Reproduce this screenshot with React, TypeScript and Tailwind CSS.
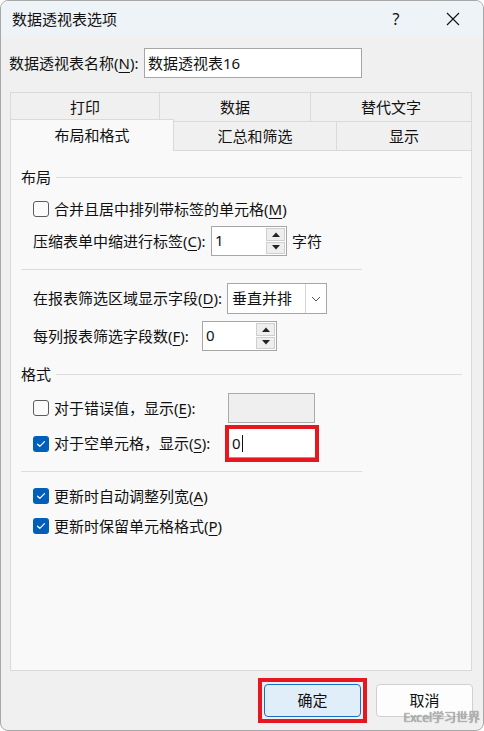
import React from 'react';

const font = "font-['Noto_Sans','Noto_Sans_CJK_SC',sans-serif]";

function Key({ k }: { k: string }) {
  return (
    <>
      (<span className="underline underline-offset-[3px] decoration-1">{k}</span>)
    </>
  );
}

function Check({ checked }: { checked?: boolean }) {
  if (checked) {
    return (
      <span className="flex h-4 w-4 shrink-0 items-center justify-center rounded-[3px] bg-[#005fb8]">
        <svg width="10" height="8" viewBox="0 0 10 8" fill="none">
          <path d="M1.5 4.2 L3.8 6.3 L8.5 1.6" stroke="white" strokeWidth="1.2" strokeLinecap="round" strokeLinejoin="round" />
        </svg>
      </span>
    );
  }
  return <span className="h-4 w-4 shrink-0 rounded-[3px] border border-[#5c5c5c] bg-[#fbfbfb]" />;
}

function Arrow({ up }: { up?: boolean }) {
  return (
    <svg width="8" height="5" viewBox="0 0 8 5">
      <path d={up ? 'M0 5 L4 0.5 L8 5 Z' : 'M0 0 L8 0 L4 4.5 Z'} fill="#222" />
    </svg>
  );
}

function Spinner({ value, width }: { value: string; width: string }) {
  return (
    <div className={`flex h-[30px] ${width} border border-[#a6a6a6] bg-white`}>
      <span className="flex-1 pl-[3px] pt-[2px] text-[15px] leading-[22px]">{value}</span>
      <div className="flex w-[20px] flex-col gap-px py-px pr-px">
        <span className="flex flex-1 items-center justify-center border border-[#cfcfcf] bg-[#eeeeee]">
          <Arrow up />
        </span>
        <span className="flex flex-1 items-center justify-center border border-[#cfcfcf] bg-[#eeeeee]">
          <Arrow />
        </span>
      </div>
    </div>
  );
}

function Heading({ text }: { text: string }) {
  return (
    <div className="flex h-5 items-center pr-[9px]">
      <span>{text}</span>
      <span className="ml-[5px] h-px flex-1 bg-[#dcdcdc]" />
    </div>
  );
}

export default function App() {
  return (
    <div className={`h-[731px] w-[484px] bg-white text-[15px] text-[#111] ${font}`}>
      <div className="relative flex h-full flex-col overflow-hidden rounded-[8px] border border-[#a8a8a8] bg-[#f0f0f0]">
        {/* title bar */}
        <div className="flex h-[36px] items-center bg-[#eef3f8] pl-[11px] pr-[7px]">
          <span>数据透视表选项</span>
          <div className="ml-auto flex gap-[11px]">
            <span className="flex w-[46px] justify-center text-[16px]">?</span>
            <span className="flex w-[46px] items-center justify-center">
              <svg width="14" height="14" viewBox="0 0 14 14">
                <path d="M1 1 L13 13 M13 1 L1 13" stroke="#111" strokeWidth="1.1" />
              </svg>
            </span>
          </div>
        </div>

        {/* name row */}
        <div className="mt-[11px] flex items-center pl-[8px]">
          <span className="w-[135px] whitespace-nowrap">
            数据透视表名称<Key k="N" />:
          </span>
          <div className="flex h-[30px] w-[218px] items-center border border-[#a6a6a6] bg-white pl-[3px]">
            数据透视表16
          </div>
        </div>

        {/* tabs */}
        <div className="ml-[9px] mt-[14px] w-[462px]">
          <div className="flex h-[29px]">
            <div className="flex w-[149px] items-center justify-center border-l border-t border-[#dadada]">打印</div>
            <div className="flex w-[151px] items-center justify-center border-l border-t border-[#dadada]">数据</div>
            <div className="flex w-[162px] items-center justify-center border-l border-r border-t border-[#dadada]">替代文字</div>
          </div>
          <div className="flex h-[29px] items-end">
            <div className="relative z-10 mb-[-1px] flex h-[32px] w-[164px] items-center justify-center border-l border-r border-t border-[#dadada] bg-[#f9f9f9]">
              布局和格式
            </div>
            <div className="flex h-[29px] w-[162px] items-center justify-center border-t border-[#dadada]">汇总和筛选</div>
            <div className="flex h-[29px] w-[136px] items-center justify-center border-l border-r border-t border-[#dadada]">显示</div>
          </div>

          {/* panel */}
          <div className="flex h-[521px] flex-col border border-[#d9d9d9] bg-[#f9f9f9] pl-[10px] pt-[16px]">
            <Heading text="布局" />
            <div className="ml-[12px] mt-[10px] flex h-6 items-center gap-[5px]">
              <Check />
              <span>
                合并且居中排列带标签的单元格<Key k="M" />
              </span>
            </div>
            <div className="ml-[12px] mt-[5px] flex h-[30px] items-center">
              <span className="w-[178px] whitespace-nowrap">
                压缩表单中缩进行标签<Key k="C" />:
              </span>
              <Spinner value="1" width="w-[76px]" />
              <span className="ml-[5px]">字符</span>
            </div>
            <div className="mt-[13px] h-px w-[341px] bg-[#dcdcdc]" />
            <div className="ml-[12px] mt-[13px] flex h-[31px] items-center">
              <span className="w-[194px] whitespace-nowrap">
                在报表筛选区域显示字段<Key k="D" />:
              </span>
              <div className="flex h-[31px] w-[100px] border border-[#a6a6a6] bg-white">
                <span className="flex flex-1 items-center pl-[4px]">垂直并排</span>
                <span className="flex w-[21px] items-center justify-center border-l border-[#d4d4d4]">
                  <svg width="10" height="6" viewBox="0 0 10 6" fill="none">
                    <path d="M1 1 L5 5 L9 1" stroke="#555" strokeWidth="1" />
                  </svg>
                </span>
              </div>
            </div>
            <div className="ml-[12px] mt-[7px] flex h-[30px] items-center">
              <span className="w-[169px] whitespace-nowrap">
                每列报表筛选字段数<Key k="F" />:
              </span>
              <Spinner value="0" width="w-[75px]" />
            </div>

            <div className="mt-[13px]">
              <Heading text="格式" />
            </div>
            <div className="ml-[12px] mt-[9px] flex h-[30px] items-center">
              <Check />
              <span className="ml-[5px] w-[174px] whitespace-nowrap">
                对于错误值，显示<Key k="E" />:
              </span>
              <div className="h-[30px] w-[87px] border border-[#ababab] bg-[#efefef]" />
            </div>
            <div className="ml-[12px] mt-[2px] flex h-[37px] items-center">
              <Check checked />
              <span className="ml-[5px] w-[171px] whitespace-nowrap">
                对于空单元格，显示<Key k="S" />:
              </span>
              <div className="h-[37px] w-[94px] border-4 border-[#e8161e] bg-white">
                <div className="flex h-full items-center border-b border-[#9a9a9a] pl-[3px]">
                  <span>0</span>
                  <span className="ml-px h-[17px] w-px bg-[#111]" />
                </div>
              </div>
            </div>
            <div className="mt-[9px] h-px w-[341px] bg-[#dcdcdc]" />
            <div className="ml-[12px] mt-[12px] flex h-6 items-center gap-[5px]">
              <Check checked />
              <span>
                更新时自动调整列宽<Key k="A" />
              </span>
            </div>
            <div className="ml-[12px] mt-[6px] flex h-6 items-center gap-[5px]">
              <Check checked />
              <span>
                更新时保留单元格格式<Key k="P" />
              </span>
            </div>
          </div>
        </div>

        {/* buttons */}
        <div className="mt-[7px] flex items-center justify-end gap-[9px] pr-[10px]">
          <div className="border-4 border-[#e8161e] p-[2px]">
            <div className="flex h-[33px] w-[97px] items-center justify-center rounded-[4px] border border-[#1a6fc4] bg-[#e0eef9]">
              确定
            </div>
          </div>
          <div className="flex h-[33px] w-[97px] items-center justify-center rounded-[4px] border border-[#d0d0d0] bg-[#fdfdfd]">
            取消
          </div>
        </div>

        <span className="absolute bottom-[3px] right-[3px] text-[12px] text-[#b8b8b8] [text-shadow:0_0_1px_#555]">
          Excel学习世界
        </span>
      </div>
    </div>
  );
}
